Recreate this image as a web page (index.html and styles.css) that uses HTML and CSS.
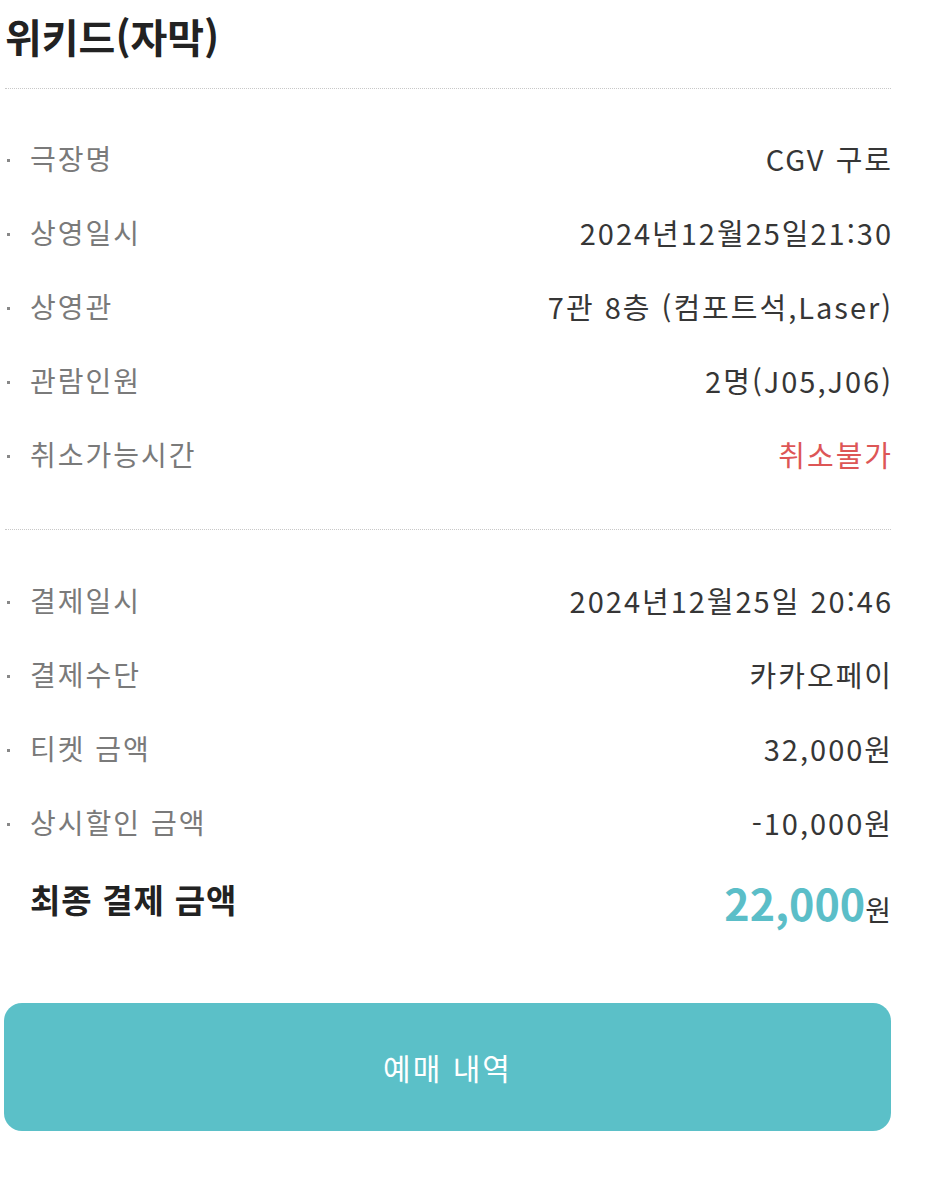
FILE: index.html
```html
<!DOCTYPE html>
<html lang="ko">
<head>
<meta charset="utf-8">
<link rel="stylesheet" href="styles.css">
</head>
<body>
<div class="page">
  <h1 class="title">위키드(자막)</h1>
  <div class="divider"></div>
  <ul class="info info-first">
    <li class="row"><span class="label">극장명</span><span class="value">CGV 구로</span></li>
    <li class="row"><span class="label">상영일시</span><span class="value">2024년12월25일21:30</span></li>
    <li class="row"><span class="label">상영관</span><span class="value">7관 8층 (컴포트석,Laser)</span></li>
    <li class="row"><span class="label">관람인원</span><span class="value">2명(J05,J06)</span></li>
    <li class="row"><span class="label">취소가능시간</span><span class="value red">취소불가</span></li>
  </ul>
  <div class="divider"></div>
  <ul class="info info-second">
    <li class="row"><span class="label">결제일시</span><span class="value">2024년12월25일 20:46</span></li>
    <li class="row"><span class="label">결제수단</span><span class="value">카카오페이</span></li>
    <li class="row"><span class="label">티켓 금액</span><span class="value">32,000원</span></li>
    <li class="row"><span class="label">상시할인 금액</span><span class="value">-10,000원</span></li>
  </ul>
  <div class="total">
    <span class="total-label">최종 결제 금액</span>
    <span class="total-value"><span class="amount">22,000</span><span class="won">원</span></span>
  </div>
  <button class="btn">예매 내역</button>
</div>
</body>
</html>
```
FILE: styles.css
```css
* { box-sizing: border-box; }
html, body { margin: 0; padding: 0; background: #fff; }
body {
  font-family: "Noto Sans CJK KR", "Noto Sans", sans-serif;
  color: #333;
}
.page {
  width: 891px;
  padding-left: 4px;
}
.title {
  margin: 0;
  height: 76px;
  padding-top: 6px;
  padding-left: 1px;
  font-size: 40px;
  font-weight: 700;
  line-height: 60px;
  color: #222;
}
.divider {
  height: 0;
  border-top: 1px dotted #c8c8c8;
  margin-left: 1px;
  margin-top: 12px;
}
.info {
  list-style: none;
  margin: 0;
  padding: 0;
}
.info-first { padding-top: 32px; padding-bottom: 26px; }
.info-second { padding-top: 33px; }
.row {
  display: flex;
  justify-content: space-between;
  align-items: center;
  height: 74px;
}
.label {
  position: relative;
  padding-left: 26px;
  color: #7a7a7a;
  font-size: 28px;
  letter-spacing: 2px;
}
.label::before {
  content: "";
  position: absolute;
  left: 3px;
  top: 50%;
  width: 3px;
  height: 3px;
  margin-top: 1px;
  background: #888;
}
.value {
  color: #363636;
  font-size: 29px;
  letter-spacing: 2px;
  margin-right: -2px;
}
.red { color: #dd5656; }
.total {
  display: flex;
  justify-content: space-between;
  align-items: center;
  height: 80px;
}
.total-label {
  padding-left: 26px;
  font-size: 33px;
  font-weight: 700;
  letter-spacing: 0.8px;
  color: #222;
}
.total-value {
  display: flex;
  align-items: baseline;
  padding-top: 6px;
}
.amount {
  font-size: 43px;
  font-weight: 700;
  color: #5bbec8;
}
.won {
  font-size: 28px;
  color: #333;
}
.btn {
  display: block;
  width: 887px;
  height: 128px;
  margin-top: 64px;
  border: none;
  border-radius: 18px;
  background: #5bc0c8;
  color: #fff;
  font-family: "Noto Sans CJK KR", "Noto Sans", sans-serif;
  font-size: 30px;
  font-weight: 400;
  letter-spacing: 2px;
}
```
